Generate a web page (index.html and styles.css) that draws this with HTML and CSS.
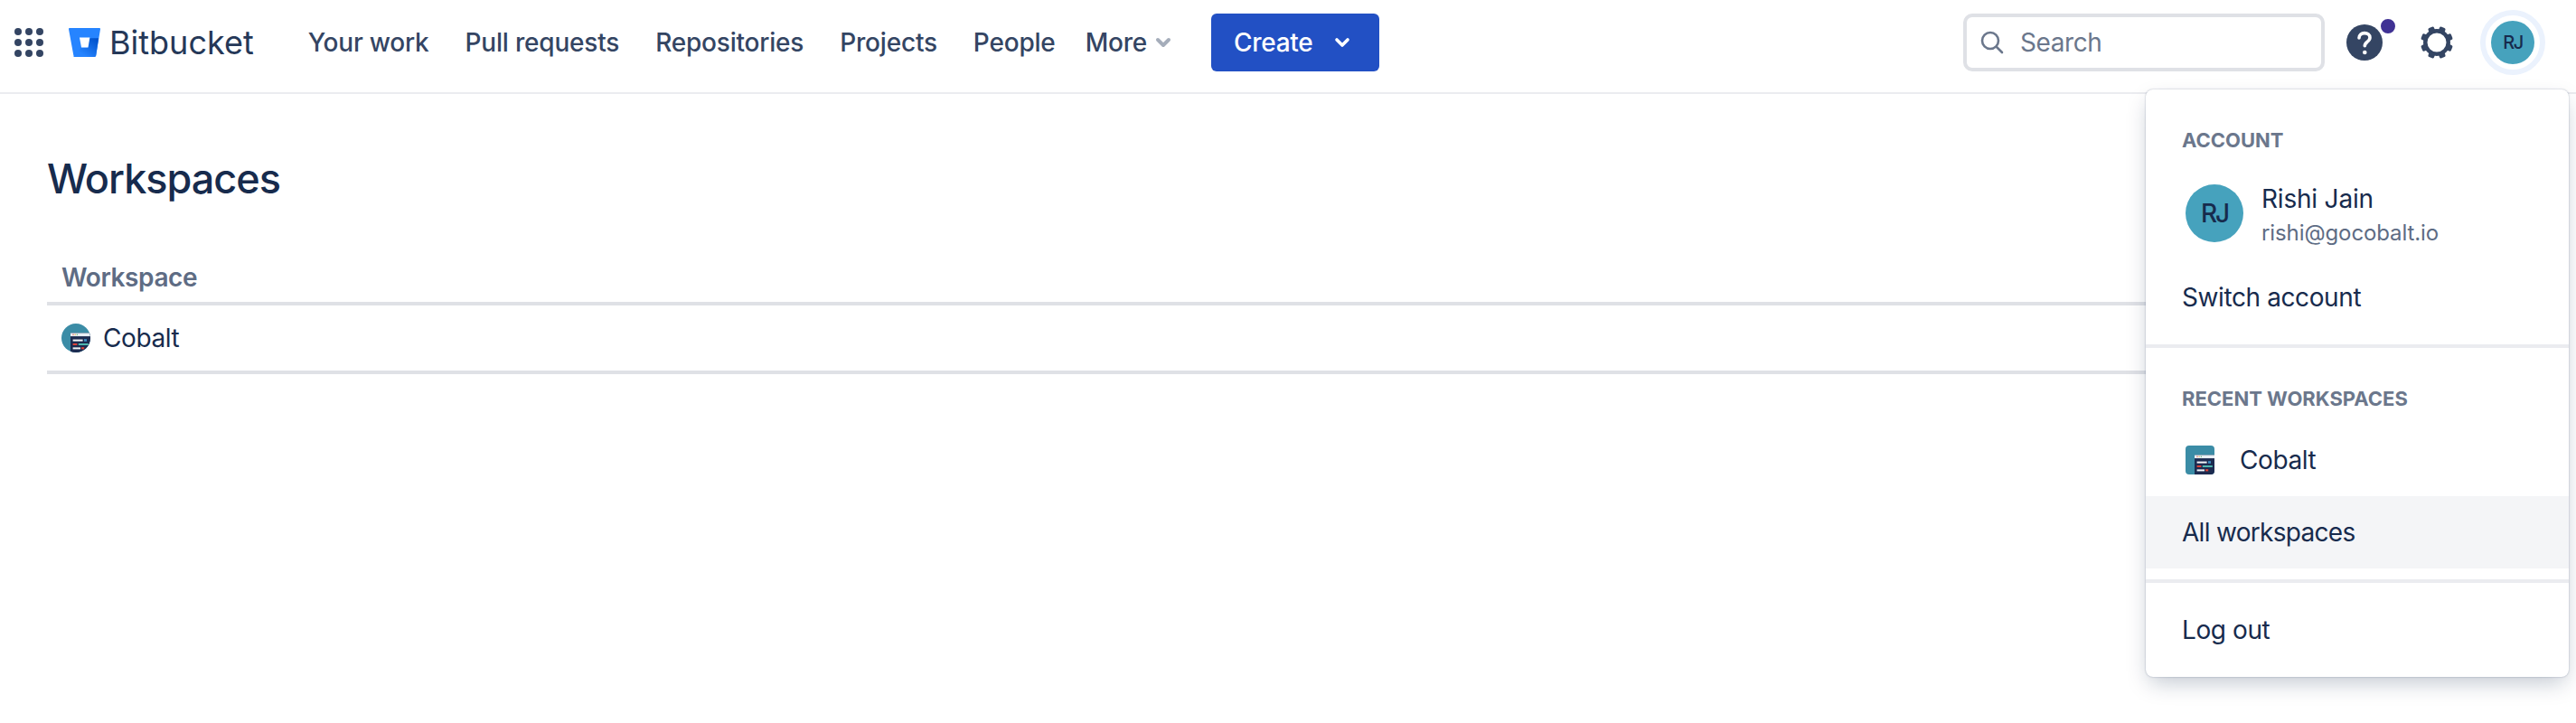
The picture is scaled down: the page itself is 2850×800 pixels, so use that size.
FILE: index.html
```html
<!DOCTYPE html>
<html lang="en">

<head>
	<meta charset="UTF-8" />
	<meta name="viewport" content="width=device-width, initial-scale=1.0" />
	<title>Workspaces - Bitbucket</title>
	<link rel="stylesheet" href="styles.css">
</head>

<body>
	<!-- shared workspace logo -->
	<svg class="defs" width="0" height="0">
		<symbol id="cobalt-logo" viewBox="0 0 32 32">
			<rect width="32" height="32" fill="#3b8ca6" />
			<rect x="10" y="10.5" width="22" height="21.5" fill="#1c2b50" />
			<rect x="10" y="10.5" width="22" height="3.6" fill="#e9eff5" />
			<rect x="12.4" y="11.7" width="1.2" height="1.2" fill="#e5574d" />
			<rect x="14.6" y="11.7" width="1.2" height="1.2" fill="#e8b84a" />
			<rect x="16.8" y="11.7" width="1.2" height="1.2" fill="#66bb7a" />
			<rect x="12.6" y="17.6" width="11" height="2" fill="#f2f4f7" />
			<rect x="25" y="17.2" width="3" height="2.6" fill="#3e8fc4" />
			<rect x="12.6" y="22" width="4.8" height="2" fill="#dc4238" />
			<rect x="18.8" y="22" width="11" height="2" fill="#4fb6ae" />
			<rect x="12.6" y="26.4" width="8.4" height="2" fill="#f2f4f7" />
			<rect x="22" y="26.2" width="3.2" height="2.2" fill="#dc4238" />
		</symbol>
	</svg>

	<header class="topbar">
		<svg class="apps" viewBox="0 0 32 32" width="32" height="32" fill="#344563">
			<circle cx="4" cy="4" r="4" /><circle cx="16" cy="4" r="4" /><circle cx="28" cy="4" r="4" />
			<circle cx="4" cy="16" r="4" /><circle cx="16" cy="16" r="4" /><circle cx="28" cy="16" r="4" />
			<circle cx="4" cy="28" r="4" /><circle cx="16" cy="28" r="4" /><circle cx="28" cy="28" r="4" />
		</svg>

		<div class="brand">
			<svg viewBox="0 0 35 32" width="35" height="32">
				<defs>
					<linearGradient id="bucket" x1="1" y1="0.15" x2="0.35" y2="0.85">
						<stop offset="0" stop-color="#0052cc" />
						<stop offset="1" stop-color="#2684ff" />
					</linearGradient>
				</defs>
				<path fill="#2684ff" d="M1.1 0h32.8a1.1 1.1 0 0 1 1.1 1.3l-4.8 29.2a1.7 1.7 0 0 1-1.7 1.5H7.3a1.9 1.9 0 0 1-1.9-1.6L0 1.3A1.1 1.1 0 0 1 1.1 0z" />
				<path fill="url(#bucket)" d="M33.1 11.2H22.6l-1.8 10.7h-7.2L5.2 31.9c.4.1 1.4.1 2.1.1h21.2a1.7 1.7 0 0 0 1.7-1.5z" />
				<path fill="#fff" d="M12 10.5h11.4l-1.9 11H14z" />
			</svg>
			<span class="brand-name">Bitbucket</span>
		</div>

		<nav class="nav">
			<a class="nav-item">Your work</a>
			<a class="nav-item">Pull requests</a>
			<a class="nav-item">Repositories</a>
			<a class="nav-item">Projects</a>
			<a class="nav-item">People</a>
			<a class="nav-item more">More
				<svg viewBox="0 0 18 12" width="18" height="12" fill="none" stroke="#a5adba" stroke-width="4" stroke-linecap="round" stroke-linejoin="round"><path d="M3 3l6 6 6-6" /></svg>
			</a>
		</nav>

		<button class="create">Create
			<svg viewBox="0 0 18 12" width="18" height="12" fill="none" stroke="#fff" stroke-width="3.6" stroke-linecap="round" stroke-linejoin="round"><path d="M3 3l6 6 6-6" /></svg>
		</button>

		<div class="right">
			<div class="search">
				<svg viewBox="0 0 26 26" width="26" height="26" fill="none" stroke="#6b778c" stroke-width="2.6" stroke-linecap="round"><circle cx="11" cy="11" r="9" /><path d="M18 18l6 6" /></svg>
				<span>Search</span>
			</div>

			<div class="help">
				<svg viewBox="0 0 40 40" width="40" height="40">
					<circle cx="20" cy="20" r="20" fill="#344563" />
					<path d="M14 15c0-3.400 2.600-5.400 6-5.400s6 2 6 5c0 2.600-1.500 3.700-3 4.800-1.400 1-2.700 1.900-2.700 4.300" fill="none" stroke="#fff" stroke-width="3.600" stroke-linecap="round" />
					<circle cx="20.300" cy="31" r="2.300" fill="#fff" />
				</svg>
				<span class="help-dot"></span>
			</div>

			<svg class="gear" viewBox="0 0 36 36" width="36" height="36" fill="#344563">
				<circle cx="18" cy="18" r="12.750" fill="none" stroke="#344563" stroke-width="4.500" />
				<g>
					<rect x="14.500" y="0" width="7" height="6" rx="1.800" transform="rotate(22.500 18 18)" />
					<rect x="14.500" y="0" width="7" height="6" rx="1.800" transform="rotate(67.500 18 18)" />
					<rect x="14.500" y="0" width="7" height="6" rx="1.800" transform="rotate(112.500 18 18)" />
					<rect x="14.500" y="0" width="7" height="6" rx="1.800" transform="rotate(157.500 18 18)" />
					<rect x="14.500" y="0" width="7" height="6" rx="1.800" transform="rotate(202.500 18 18)" />
					<rect x="14.500" y="0" width="7" height="6" rx="1.800" transform="rotate(247.500 18 18)" />
					<rect x="14.500" y="0" width="7" height="6" rx="1.800" transform="rotate(292.500 18 18)" />
					<rect x="14.500" y="0" width="7" height="6" rx="1.800" transform="rotate(337.500 18 18)" />
				</g>
			</svg>

			<div class="me-ring">
				<div class="avatar small">RJ</div>
			</div>
		</div>
	</header>

	<main class="content">
		<h1>Workspaces</h1>
		<table class="workspaces">
			<tr>
				<th>Workspace</th>
			</tr>
			<tr>
				<td>
					<div class="ws-cell">
						<svg class="ws-logo round" width="32" height="32"><use href="#cobalt-logo" /></svg>
						Cobalt
					</div>
				</td>
			</tr>
		</table>
	</main>

	<!-- account dropdown -->
	<div class="menu">
		<section class="menu-section">
			<h2>Account</h2>
			<div class="user">
				<div class="avatar big">RJ</div>
				<div class="user-text">
					<div class="user-name">Rishi Jain</div>
					<div class="user-mail">rishi@gocobalt.io</div>
				</div>
			</div>
			<a class="menu-item">Switch account</a>
		</section>
		<section class="menu-section">
			<h2 class="recent">Recent workspaces</h2>
			<a class="menu-item with-logo">
				<svg class="ws-logo square" width="32" height="32"><use href="#cobalt-logo" /></svg>
				Cobalt
			</a>
			<a class="menu-item hover tight">All workspaces</a>
		</section>
		<section class="menu-section">
			<a class="menu-item">Log out</a>
		</section>
	</div>
</body>

</html>
```
FILE: styles.css
```css
* {
	box-sizing: border-box;
}

body {
	margin: 0;
	font-family: "Inter", "Liberation Sans", sans-serif;
	color: #172b4d;
	background-color: white;
}

.defs {
	display: block;
}

/* Top bar */
.topbar {
	display: flex;
	align-items: center;
	height: 104px;
	padding-bottom: 9px;
	padding-left: 16px;
	border-bottom: 2px solid #ebecf0;
}

.apps {
	flex: none;
}

.brand {
	display: flex;
	align-items: center;
	gap: 10px;
	margin-left: 28px;
}

.brand-name {
	font-size: 36px;
	line-height: 40px;
	color: #253858;
}

.nav {
	display: flex;
	align-items: center;
	margin-left: 40px;
}

.nav-item {
	padding: 0 20px;
	font-size: 28px;
	line-height: 40px;
	font-weight: 500;
	letter-spacing: -0.2px;
	color: #344563;
}

.more {
	display: flex;
	align-items: center;
	gap: 9px;
	padding-left: 13px;
}

.create {
	display: flex;
	align-items: center;
	gap: 24px;
	height: 64px;
	width: 186px;
	margin-left: 24px;
	padding: 0 0 0 25px;
	border: 0;
	border-radius: 6px;
	background-color: #2250c4;
	color: white;
	font-family: inherit;
	font-size: 28px;
	font-weight: 500;
	letter-spacing: -0.3px;
}

.right {
	display: flex;
	align-items: center;
	margin-left: auto;
	padding-right: 34px;
}

.search {
	display: flex;
	align-items: center;
	gap: 18px;
	width: 400px;
	height: 64px;
	padding-left: 15px;
	border: 4px solid #dfe1e6;
	border-radius: 10px;
	font-size: 28px;
	letter-spacing: -0.4px;
	color: #6b778c;
}

.help {
	position: relative;
	width: 40px;
	height: 40px;
	margin-left: 24px;
}

.help svg {
	display: block;
}

.help-dot {
	position: absolute;
	top: -8px;
	right: -16px;
	width: 20px;
	height: 20px;
	border: 2px solid white;
	border-radius: 50%;
	background-color: #403294;
}

.gear {
	margin-left: 42px;
}

.me-ring {
	display: flex;
	align-items: center;
	justify-content: center;
	width: 72px;
	height: 72px;
	margin-left: 30px;
	border: 6px solid #ebf2fd;
	border-radius: 50%;
}

.avatar {
	display: flex;
	align-items: center;
	justify-content: center;
	flex: none;
	border-radius: 50%;
	background-color: #46a2bd;
	color: #172b4d;
	font-weight: 500;
}

.avatar.small {
	width: 48px;
	height: 48px;
	font-size: 20px;
	letter-spacing: -1.5px;
}

.avatar.big {
	width: 64px;
	height: 64px;
	font-size: 28px;
	letter-spacing: -2px;
}

/* Page content */
.content {
	padding: 66px 52px 0;
}

h1 {
	margin: 0 0 61px;
	font-size: 45px;
	line-height: 56px;
	font-weight: 500;
	letter-spacing: -1px;
}

.workspaces {
	width: 100%;
	border-spacing: 0;
	letter-spacing: -0.4px;
}

.workspaces th {
	padding: 0 16px 7px;
	text-align: left;
	font-size: 28px;
	line-height: 40px;
	font-weight: 600;
	color: #5e6c84;
	border-bottom: 4px solid #dfe1e6;
}

.workspaces td {
	height: 76px;
	padding: 0 16px;
	font-size: 28px;
	border-bottom: 4px solid #dfe1e6;
}

.ws-cell {
	display: flex;
	align-items: center;
	gap: 14px;
}

.ws-logo {
	flex: none;
}

.ws-logo.round {
	border-radius: 50%;
}

.ws-logo.square {
	border-radius: 4px;
}

/* Account dropdown */
.menu {
	position: absolute;
	top: 99px;
	left: 2374px;
	width: 468px;
	border-radius: 8px;
	background-color: white;
	box-shadow: 0 0 2px rgba(9, 30, 66, 0.35), 0 10px 24px -4px rgba(9, 30, 66, 0.25);
}

.menu-section {
	padding: 12px 0;
}

.menu-section + .menu-section {
	border-top: 4px solid #ebecf0;
}

.menu h2 {
	margin: 24px 0 0;
	padding-left: 40px;
	font-size: 22px;
	line-height: 40px;
	font-weight: 700;
	text-transform: uppercase;
	color: #6b778c;
}

.menu h2.recent {
	margin-bottom: 8px;
}

.user {
	display: flex;
	align-items: center;
	gap: 20px;
	height: 80px;
	margin: 21px 0 13px;
	padding-left: 44px;
}

.user-text {
	padding-top: 3px;
}

.user-name {
	font-size: 28px;
	line-height: 36px;
	letter-spacing: -0.2px;
}

.user-mail {
	margin-top: 4px;
	font-size: 24px;
	line-height: 32px;
	letter-spacing: -0.1px;
	color: #5e6c84;
}

.menu-item {
	display: flex;
	align-items: center;
	height: 80px;
	padding-left: 40px;
	font-size: 28px;
	letter-spacing: -0.4px;
}

.menu-item.with-logo {
	gap: 28px;
	padding-left: 44px;
}

.menu-item.hover {
	background-color: #f4f5f7;
}

.menu-item.tight {
	letter-spacing: -0.7px;
}
```
